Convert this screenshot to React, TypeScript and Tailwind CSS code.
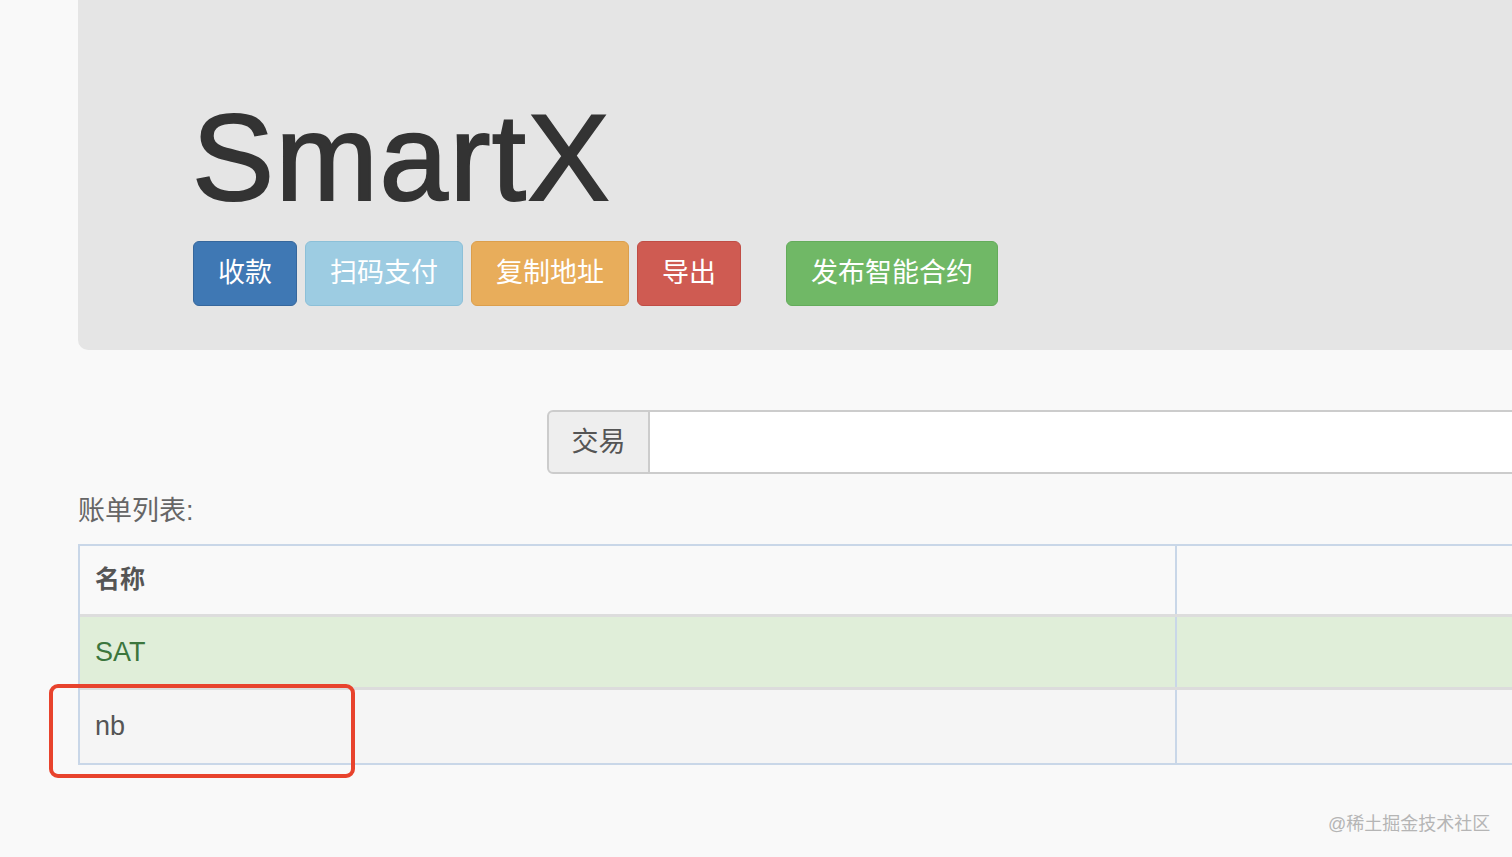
import React from 'react';

const FONT = '"Liberation Sans", "Noto Sans CJK SC", sans-serif';

const ACTIONS = [
  { label: '收款', cls: 'w-[104px] bg-[#3f78b4] border-[#36679c]' },
  { label: '扫码支付', cls: 'w-[158px] bg-[#9dcce2] border-[#8cc0d8]' },
  { label: '复制地址', cls: 'w-[158px] bg-[#e8ad5b] border-[#dc9f4c]' },
  { label: '导出', cls: 'w-[104px] bg-[#cf5b52] border-[#c04d45]' },
];

const ROWS = [
  { name: 'SAT', cls: 'bg-[#e0eed9] text-[#3c763d]' },
  { name: 'nb', cls: 'bg-[#f5f5f5] text-[#555]' },
];

export default function App() {
  return (
    <div className="relative w-[1512px] h-[857px] overflow-hidden bg-[#f9f9f9]" style={{ fontFamily: FONT }}>
      <div className="pl-[78px]">
        {/* JUMBOTRON */}
        <div className="h-[350px] bg-[#e5e5e5] rounded-bl-[10px] pl-[115px] pt-[90px]">
          <h1 className="text-[123px] leading-[135px] text-[#333] -ml-[1px] tracking-[1.5px] [-webkit-text-stroke:2px_#333]">SmartX</h1>
          <div className="flex items-center mt-[16px]">
            <div className="flex gap-[8px]">
              {ACTIONS.map(a => (
                <button
                  key={a.label}
                  className={`h-[65px] rounded-[6px] border text-white text-[27px] flex items-center justify-center ${a.cls}`}
                >
                  {a.label}
                </button>
              ))}
            </div>
            <button className="ml-[45px] w-[212px] h-[65px] rounded-[6px] border border-[#64ac5b] bg-[#70b866] text-white text-[27px] flex items-center justify-center">
              发布智能合约
            </button>
          </div>
        </div>

        {/* INPUT GROUP */}
        <div className="mt-[60px] ml-[469px] flex h-[64px]">
          <div className="w-[103px] flex items-center justify-center bg-[#eeeeee] border-2 border-[#cccccc] rounded-l-[6px] text-[27px] text-[#555]">
            交易
          </div>
          <div className="flex-1 bg-white border-y-2 border-[#cccccc]"></div>
        </div>

        <p className="mt-[20px] text-[27px] leading-[34px] text-[#666]">账单列表:</p>

        {/* TABLE */}
        <div className="mt-[16px] w-[1600px] border-2 border-[#c9d7e8]">
          <div className="flex h-[71px] border-b-[3px] border-[#dddddd]">
            <div className="w-[1097px] border-r-2 border-[#c9d7e8] flex items-center pl-[15px] text-[25px] font-bold text-[#555]">
              名称
            </div>
            <div className="flex-1"></div>
          </div>
          {ROWS.map((r, i) => (
            <div
              key={r.name}
              className={`flex h-[73px] ${i === 0 ? 'border-b-[3px] border-[#dcdcdc]' : ''} ${r.cls}`}
            >
              <div className="w-[1097px] border-r-2 border-[#c9d7e8] flex items-center pl-[15px] text-[27px]">
                {r.name}
              </div>
              <div className="flex-1"></div>
            </div>
          ))}
        </div>
      </div>

      {/* annotation */}
      <div className="absolute left-[49px] top-[684px] w-[306px] h-[94px] border-[4px] border-[#e8432d] rounded-[9px]"></div>

      <div className="absolute left-[1328px] top-[811px] text-[18px] text-[#b5b5b5]">@稀土掘金技术社区</div>
    </div>
  );
}
